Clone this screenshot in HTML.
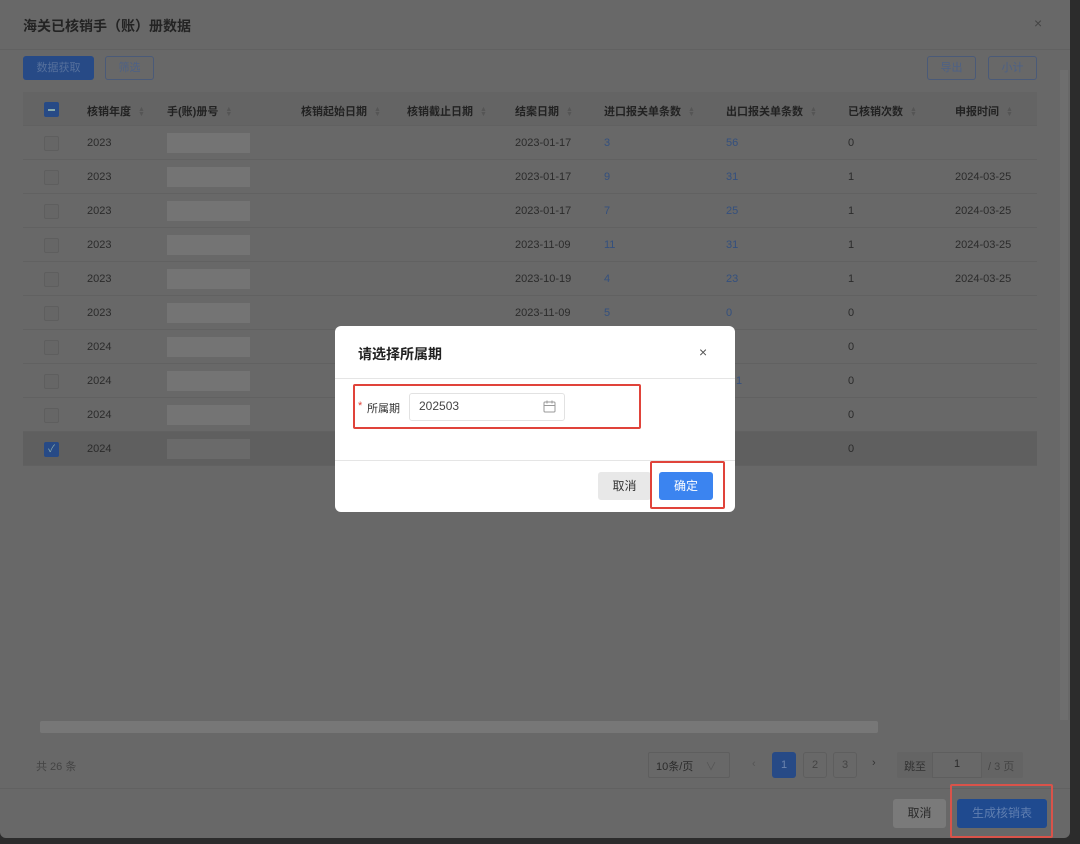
<!DOCTYPE html>
<html><head><meta charset="utf-8"><style>
*{box-sizing:border-box;margin:0;padding:0}
body{width:1080px;height:844px;background:#2c2c2c;position:relative;overflow:hidden;font-family:"Liberation Sans","Noto Sans CJK SC",sans-serif;font-size:11px;color:#2b2b2b}
.a{position:absolute}
#dlg{left:0;top:0;width:1070px;height:838px;background:#686868;border-radius:0 0 6px 6px}
.t{position:absolute;white-space:nowrap}
.row{position:absolute;left:23px;width:1014px;height:34px;border-bottom:1px solid #616161}
.row .t{top:11px}
.cb{position:absolute;left:21px;top:10px;width:15px;height:15px;border:1px solid #5e5e5e;border-radius:2px;background:#666}
.blur{position:absolute;left:144px;top:7px;width:83px;height:20px;background:#747474}
.lk{color:#34507e}
.sort{display:inline-block;margin-left:7px;font-size:7px;line-height:5px;color:#555;vertical-align:middle}
.btn{position:absolute;border-radius:3px;text-align:center}
</style></head><body>
<div id="dlg" class="a">
<div class="t" style="left:23px;top:16px;font-size:14px;font-weight:bold;color:#232323">海关已核销手（账）册数据</div>
<div class="t" style="left:1034px;top:15px;font-size:14px;color:#444">×</div>
<div class="a" style="left:0;top:49px;width:1070px;height:1px;background:#616161"></div>
<div class="btn" style="left:23px;top:56px;width:71px;height:24px;background:#274a86;color:#56709c;line-height:24px">数据获取</div>
<div class="btn" style="left:105px;top:56px;width:49px;height:24px;border:1px solid #4a5a78;color:#4d6186;line-height:22px">筛选</div>
<div class="btn" style="left:927px;top:56px;width:49px;height:24px;border:1px solid #4a5a78;color:#4d6186;line-height:22px">导出</div>
<div class="btn" style="left:988px;top:56px;width:49px;height:24px;border:1px solid #4a5a78;color:#4d6186;line-height:22px">小计</div>
<div class="a" style="left:1060px;top:70px;width:8px;height:650px;background:#6e6e6e"></div>

<div class="row" style="top:92px;background:#646464;font-weight:bold;color:#222">
<div class="cb" style="background:#274a86;border-color:#274a86"><div style="position:absolute;left:3px;top:6px;width:7px;height:2px;background:#8aa"></div></div>
<div class="t" style="left:64px">核销年度<span class="sort">▲<br>▼</span></div>
<div class="t" style="left:144px">手(账)册号<span class="sort">▲<br>▼</span></div>
<div class="t" style="left:278px">核销起始日期<span class="sort">▲<br>▼</span></div>
<div class="t" style="left:384px">核销截止日期<span class="sort">▲<br>▼</span></div>
<div class="t" style="left:492px">结案日期<span class="sort">▲<br>▼</span></div>
<div class="t" style="left:581px">进口报关单条数<span class="sort">▲<br>▼</span></div>
<div class="t" style="left:703px">出口报关单条数<span class="sort">▲<br>▼</span></div>
<div class="t" style="left:825px">已核销次数<span class="sort">▲<br>▼</span></div>
<div class="t" style="left:932px">申报时间<span class="sort">▲<br>▼</span></div>
</div>

<div class="row" style="top:126px"><div class="cb"></div><div class="t" style="left:64px">2023</div><div class="blur"></div><div class="t" style="left:492px">2023-01-17</div><div class="t lk" style="left:581px">3</div><div class="t lk" style="left:703px">56</div><div class="t" style="left:825px">0</div></div>
<div class="row" style="top:160px"><div class="cb"></div><div class="t" style="left:64px">2023</div><div class="blur"></div><div class="t" style="left:492px">2023-01-17</div><div class="t lk" style="left:581px">9</div><div class="t lk" style="left:703px">31</div><div class="t" style="left:825px">1</div><div class="t" style="left:932px">2024-03-25</div></div>
<div class="row" style="top:194px"><div class="cb"></div><div class="t" style="left:64px">2023</div><div class="blur"></div><div class="t" style="left:492px">2023-01-17</div><div class="t lk" style="left:581px">7</div><div class="t lk" style="left:703px">25</div><div class="t" style="left:825px">1</div><div class="t" style="left:932px">2024-03-25</div></div>
<div class="row" style="top:228px"><div class="cb"></div><div class="t" style="left:64px">2023</div><div class="blur"></div><div class="t" style="left:492px">2023-11-09</div><div class="t lk" style="left:581px">11</div><div class="t lk" style="left:703px">31</div><div class="t" style="left:825px">1</div><div class="t" style="left:932px">2024-03-25</div></div>
<div class="row" style="top:262px"><div class="cb"></div><div class="t" style="left:64px">2023</div><div class="blur"></div><div class="t" style="left:492px">2023-10-19</div><div class="t lk" style="left:581px">4</div><div class="t lk" style="left:703px">23</div><div class="t" style="left:825px">1</div><div class="t" style="left:932px">2024-03-25</div></div>
<div class="row" style="top:296px"><div class="cb"></div><div class="t" style="left:64px">2023</div><div class="blur"></div><div class="t" style="left:492px">2023-11-09</div><div class="t lk" style="left:581px">5</div><div class="t lk" style="left:703px">0</div><div class="t" style="left:825px">0</div></div>
<div class="row" style="top:330px"><div class="cb"></div><div class="t" style="left:64px">2024</div><div class="blur"></div><div class="t" style="left:825px">0</div></div>
<div class="row" style="top:364px"><div class="cb"></div><div class="t" style="left:64px">2024</div><div class="blur"></div><div class="t lk" style="left:713px">1</div><div class="t" style="left:825px">0</div></div>
<div class="row" style="top:398px"><div class="cb"></div><div class="t" style="left:64px">2024</div><div class="blur"></div><div class="t" style="left:825px">0</div></div>
<div class="row" style="top:432px;background:#5f5f5f"><div class="cb" style="background:#274a86;border-color:#274a86;color:#8aa;font-size:10px;line-height:13px;text-align:center">✓</div><div class="t" style="left:64px">2024</div><div class="blur" style="background:#6a6a6a"></div><div class="t" style="left:825px">0</div></div>

<div class="a" style="left:40px;top:721px;width:838px;height:12px;background:#777;border-radius:2px"></div>
<div class="t" style="left:36px;top:758px;color:#444">共 26 条</div>
<div class="a" style="left:648px;top:752px;width:82px;height:26px;border:1px solid #5e5e5e;border-radius:2px"></div>
<div class="t" style="left:656px;top:758px">10条/页&nbsp;&nbsp;&nbsp;&nbsp;<span style="color:#555">∨</span></div>
<div class="t" style="left:752px;top:758px;color:#555">‹</div>
<div class="btn" style="left:772px;top:752px;width:24px;height:26px;background:#274a86;color:#6c84ae;line-height:26px">1</div>
<div class="btn" style="left:803px;top:752px;width:24px;height:26px;border:1px solid #5e5e5e;color:#444;line-height:24px">2</div>
<div class="btn" style="left:833px;top:752px;width:24px;height:26px;border:1px solid #5e5e5e;color:#444;line-height:24px">3</div>
<div class="t" style="left:872px;top:757px;color:#333">›</div>
<div class="a" style="left:897px;top:752px;width:126px;height:26px;background:#646464;border-radius:2px"></div>
<div class="t" style="left:904px;top:758px;color:#333">跳至</div>
<div class="a" style="left:932px;top:752px;width:50px;height:26px;background:#686868;border:1px solid #5e5e5e"></div>
<div class="t" style="left:954px;top:758px">1</div>
<div class="t" style="left:988px;top:758px;color:#444">/ 3 页</div>
<div class="a" style="left:0;top:788px;width:1070px;height:1px;background:#616161"></div>
<div class="btn" style="left:893px;top:799px;width:53px;height:29px;background:#7a7a7a;line-height:29px;font-size:12px;color:#2a2a2a">取消</div>
<div class="btn" style="left:957px;top:799px;width:90px;height:29px;background:#1f4a8f;line-height:29px;font-size:12px;color:#5f7eb0">生成核销表</div>
<div class="a" style="left:950px;top:784px;width:103px;height:54px;border:2px solid #d9534a;border-radius:2px"></div>
</div>

<div class="a" style="left:335px;top:326px;width:400px;height:186px;background:#fff;border-radius:6px">
<div class="t" style="left:23px;top:18px;font-size:14px;font-weight:bold;color:#222">请选择所属期</div>
<div class="t" style="left:364px;top:18px;font-size:14px;color:#555">×</div>
<div class="a" style="left:0;top:52px;width:400px;height:1px;background:#e5e5e5"></div>
<div class="a" style="left:18px;top:58px;width:288px;height:45px;border:2px solid #e0433a;border-radius:2px"></div>
<div class="t" style="left:23px;top:74px;color:#e0433a">*</div>
<div class="t" style="left:32px;top:74px;color:#333">所属期</div>
<div class="a" style="left:74px;top:67px;width:156px;height:28px;border:1px solid #e2e2e2;border-radius:3px"></div>
<div class="t" style="left:84px;top:73px;font-size:12px;color:#444">202503</div>
<svg class="a" style="left:208px;top:74px" width="13" height="13" viewBox="0 0 13 13"><rect x="1" y="2" width="11" height="10" rx="1" fill="none" stroke="#999"/><path d="M1 5.5h11M4 0.5v3M9 0.5v3" stroke="#999"/></svg>
<div class="a" style="left:0;top:134px;width:400px;height:1px;background:#e5e5e5"></div>
<div class="btn" style="left:263px;top:146px;width:53px;height:28px;background:#e8e8e8;line-height:28px;font-size:12px;color:#333">取消</div>
<div class="btn" style="left:324px;top:146px;width:54px;height:28px;background:#3b84f0;line-height:28px;font-size:12px;color:#fff">确定</div>
<div class="a" style="left:315px;top:135px;width:75px;height:48px;border:2px solid #e0433a;border-radius:2px"></div>
</div>
</body></html>
